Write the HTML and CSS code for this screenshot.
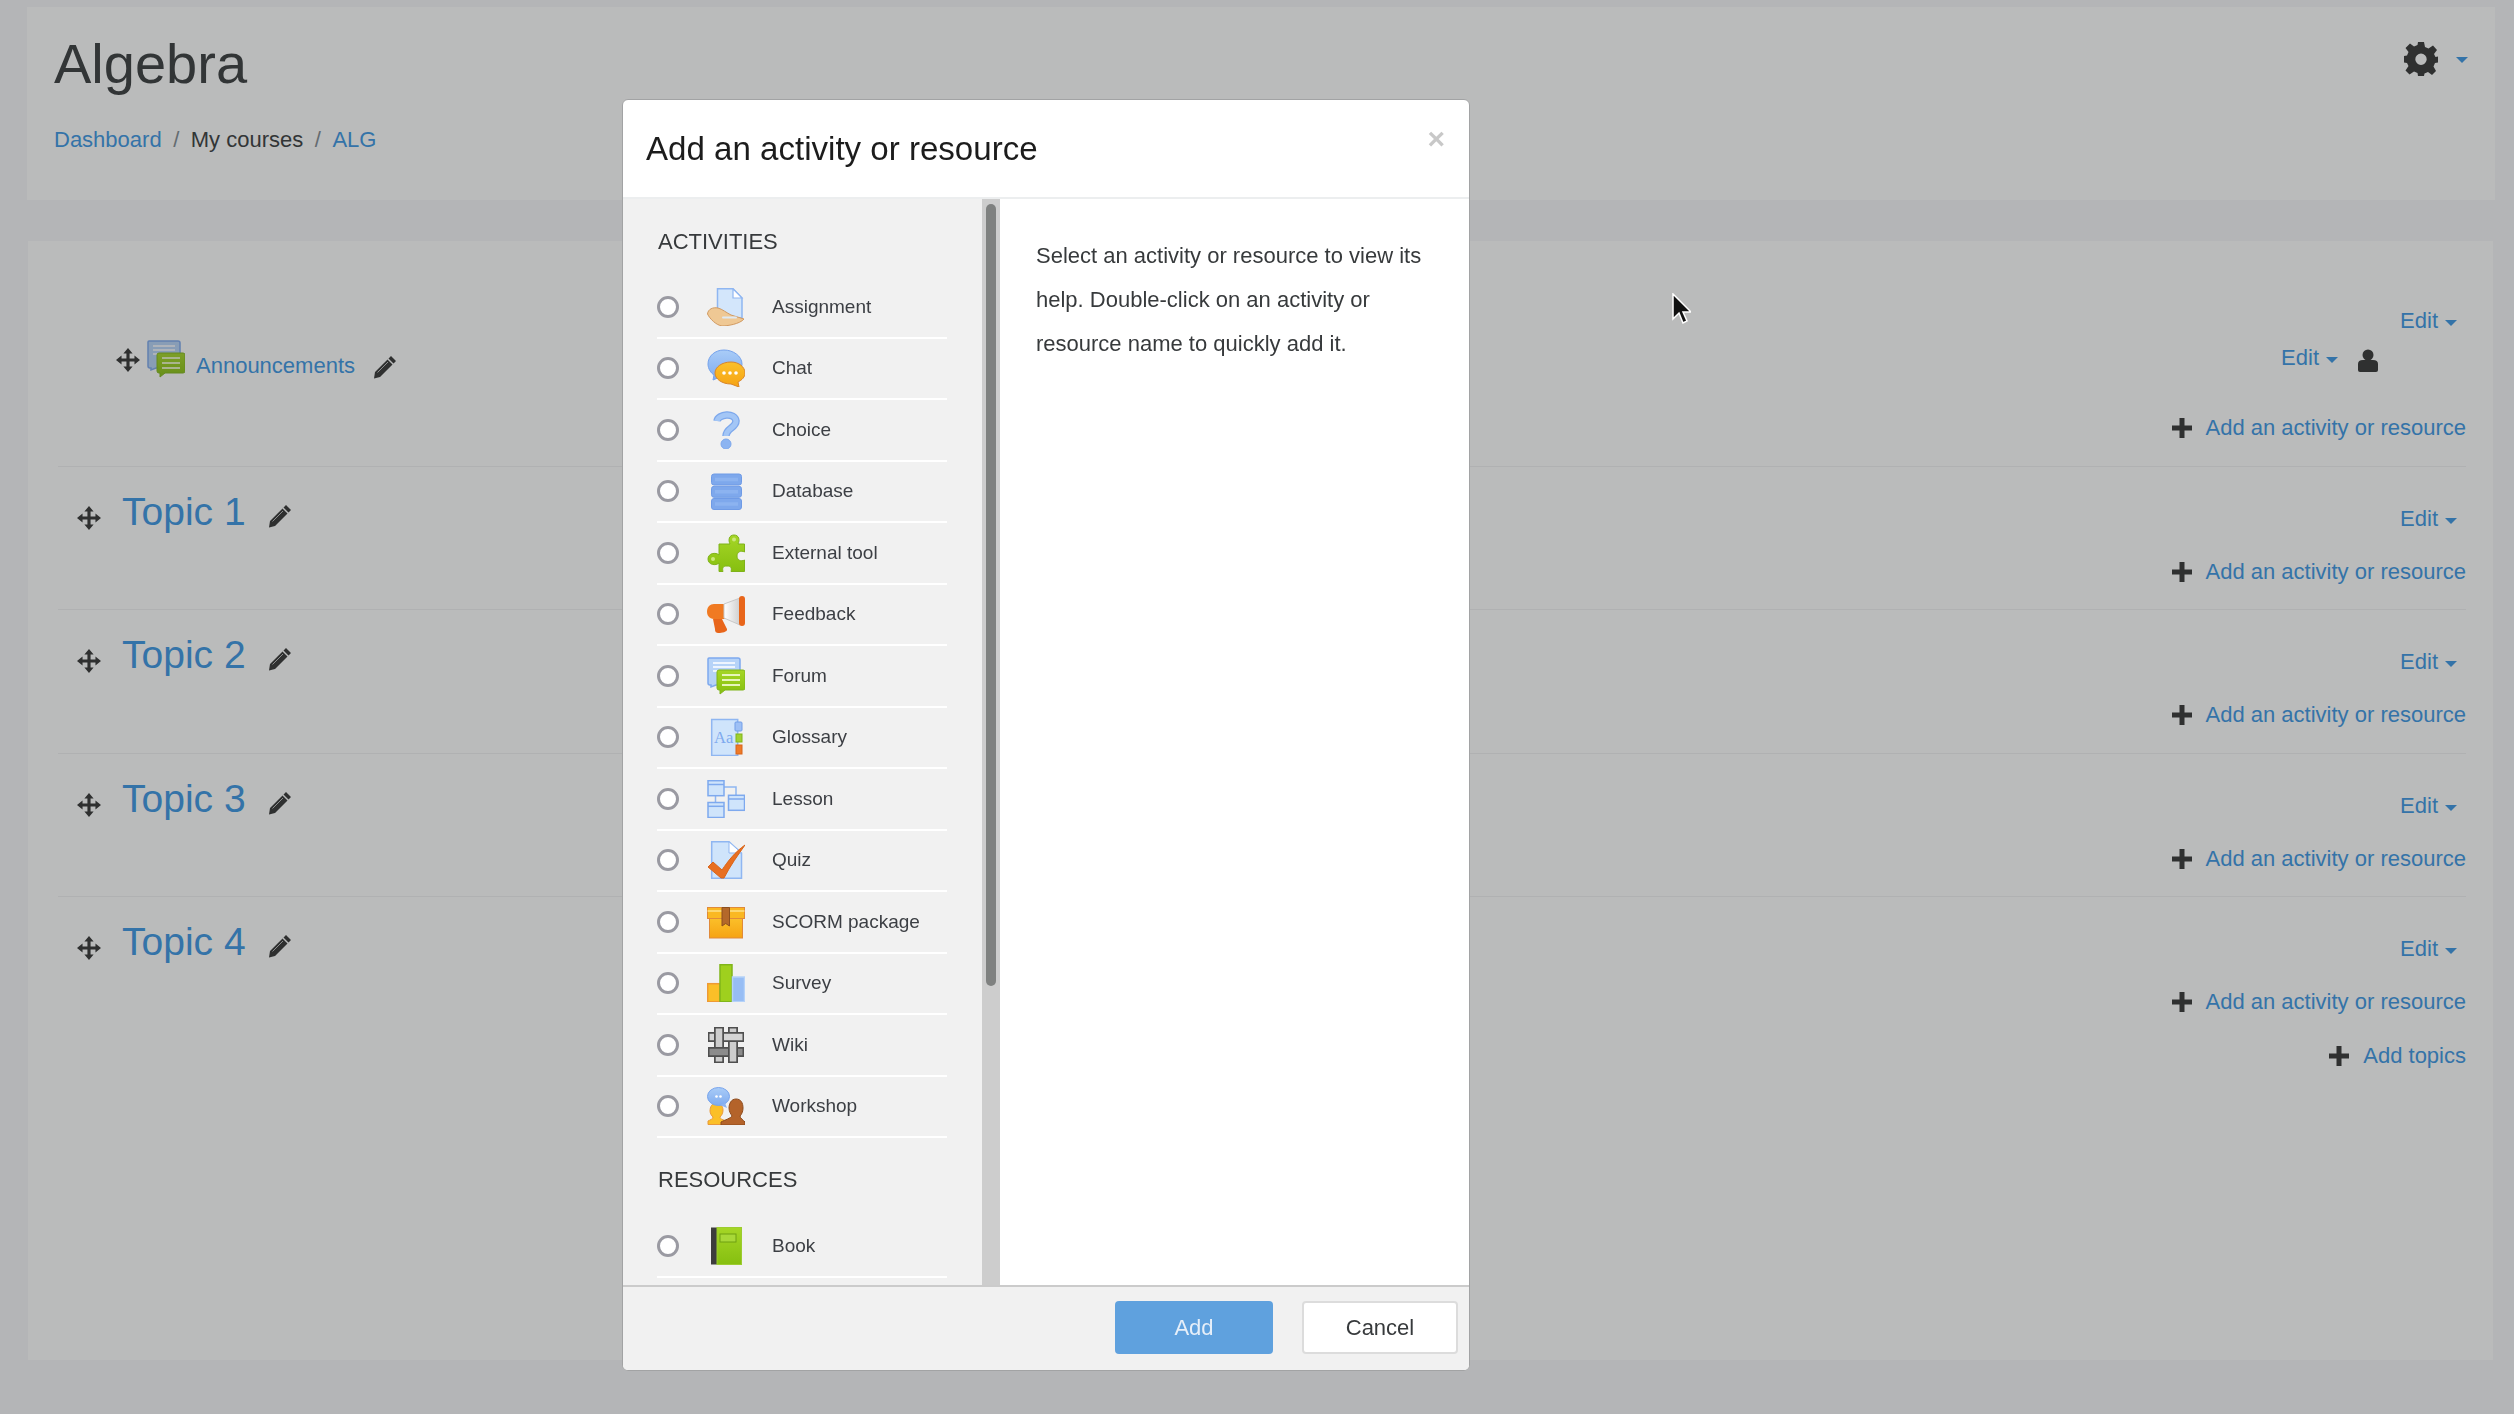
FILE: index.html
```html
<!DOCTYPE html>
<html lang="en">
<head>
<meta charset="utf-8">
<title>Algebra</title>
<link rel="stylesheet" href="styles.css">
</head>
<body>
<svg class="sprite" aria-hidden="true">
  <defs>
    <linearGradient id="gb" x1="0" y1="0" x2="0" y2="1"><stop offset="0" stop-color="#a9ccf7"/><stop offset="1" stop-color="#7fabef"/></linearGradient>
    <linearGradient id="go" x1="0" y1="0" x2="0" y2="1"><stop offset="0" stop-color="#fbc02a"/><stop offset="1" stop-color="#f6a313"/></linearGradient>
    <linearGradient id="gg" x1="0" y1="0" x2="0" y2="1"><stop offset="0" stop-color="#a5d626"/><stop offset="1" stop-color="#86bf10"/></linearGradient>
    <linearGradient id="gw" x1="0" y1="0" x2="1" y2="0"><stop offset="0" stop-color="#ffffff"/><stop offset="1" stop-color="#cfcfcf"/></linearGradient>
    <symbol id="i-assign" viewBox="0 0 38 38">
      <path d="M10.500 .8H26L35 10V30H10.500Z" fill="#d3e6fb" stroke="#8fb6f1" stroke-width="1.500"/>
      <path d="M26 .8V10H35Z" fill="#fff" stroke="#8fb6f1" stroke-width="1.200"/>
      <path d="M.5 26C1 21 6 19 11 20C15 21 20 25 24 27L37 31C33 36 20 38 15 38C9 37 3 31 .5 26Z" fill="#efc894" stroke="#d19a62"/>
      <path d="M16 29.500H29" stroke="#dfe9f2" stroke-width="2" stroke-linecap="round"/>
    </symbol>
    <symbol id="i-chat" viewBox="0 0 38 38">
      <path d="M17 1C8 1 1 7 1 15C1 20 4 24 7 26L6 31L13 28C15 29 18 29 20 29C28 29 35 23 35 15C35 7 26 1 17 1Z" fill="url(#gb)" stroke="#76a3ec"/>
      <path d="M24 13C15 13 8 18 8 24C8 30 15 35 24 35L32 38L31 33C35 31 38 28 38 24C38 18 32 13 24 13Z" fill="url(#go)" stroke="#d8852a"/>
      <circle cx="17" cy="24" r="1.800" fill="#fff"/><circle cx="23" cy="24" r="1.800" fill="#fff"/><circle cx="29" cy="24" r="1.800" fill="#fff"/>
    </symbol>
    <symbol id="i-choice" viewBox="0 0 38 38">
      <path d="M10 10C11 3 28 1 29 10C29 17 19 17 19 25" fill="none" stroke="#7da8ec" stroke-width="7.500"/>
      <path d="M10 10C11 3 28 1 29 10C29 17 19 17 19 25" fill="none" stroke="#a3c6f6" stroke-width="5"/>
      <circle cx="19" cy="33" r="5" fill="#8cb4f1" stroke="#7da8ec"/>
    </symbol>
    <symbol id="i-db" viewBox="0 0 38 38">
      <rect x="4.500" y="2" width="30" height="11" rx="2.500" fill="#7ea8ec" stroke="#6f9be6"/>
      <rect x="4.500" y="14.300" width="30" height="11" rx="2.500" fill="#7ea8ec" stroke="#6f9be6"/>
      <rect x="4.500" y="26.500" width="30" height="11" rx="2.500" fill="#7ea8ec" stroke="#6f9be6"/>
      <path d="M8 7.500H31M8 19.800H31M8 32H31" stroke="#8cb3f0" stroke-width="3.500"/>
    </symbol>
    <symbol id="i-ext" viewBox="0 0 38 38">
      <path d="M12 10H23C21 6 22 1 27 1C32 1 33 6 31 10H37.500V18C34 16 30 18 30 22C30 26 34 28 37.500 26V37.500H24C25 34 24 32 20 32C16 32 15 34 16 37.500H12V29C9 32 1 31 1 25C1 19 9 18 12 21Z" fill="url(#gg)" stroke="#7fb21a"/>
      <circle cx="27" cy="5.500" r="2" fill="#cbe77c"/><circle cx="6" cy="25" r="2" fill="#cbe77c"/>
    </symbol>
    <symbol id="i-feed" viewBox="0 0 38 38">
      <path d="M7 9H18V24H7C2 24 0 20 0 16.500C0 12 3 9 7 9Z" fill="#f07a22"/>
      <path d="M6 24H15L20 34C21 37 14 38 12 38C9 38 8 37 8 34Z" fill="#e8651a"/>
      <path d="M17 9L33 3V30L17 23Z" fill="url(#gw)" stroke="#c8c8c8"/>
      <rect x="32" y="1" width="6" height="30" rx="3" fill="#e8651a"/>
    </symbol>
    <symbol id="i-forum" viewBox="0 0 38 38">
      <path d="M2 1H31Q33 1 33 3V26Q33 28 31 28H9L4 30V28H3Q1 28 1 26V2Q1 1 2 1Z" fill="#b6d3f8" stroke="#7ea9ee" stroke-width="1.500"/>
      <path d="M6 6H28M6 10H28M6 14H28" stroke="#fff" stroke-width="1.500"/>
      <path d="M12 13H36Q38 13 38 15V31Q38 33 36 33H18L13 37V33H12Q10 33 10 31V15Q10 13 12 13Z" fill="url(#gg)" stroke="#80b51a"/>
      <path d="M15 18H33M15 23H33M15 28H33" stroke="#e6f5bb" stroke-width="2"/>
    </symbol>
    <symbol id="i-gloss" viewBox="0 0 38 38">
      <rect x="4.700" y="1.500" width="26" height="36" fill="#cfe4fb" stroke="#8fb6f1" stroke-width="1.500"/>
      <text x="7" y="25" class="aa">Aa</text>
      <rect x="28" y="4" width="7" height="9" rx="1" fill="#9ec0f5" stroke="#739fe8"/>
      <rect x="29" y="16" width="6" height="8" fill="#a0d030" stroke="#80b51a"/>
      <rect x="29" y="27" width="6" height="9" fill="#ee7a28" stroke="#d8651a"/>
    </symbol>
    <symbol id="i-lesson" viewBox="0 0 38 38">
      <path d="M17 7H29V15M8.500 16V22" fill="none" stroke="#8fb6f1" stroke-width="1.500"/>
      <rect x="1" y=".7" width="16" height="15" fill="#cfe4fb" stroke="#7ea9ee" stroke-width="1.500"/>
      <path d="M1 4.500H17" stroke="#7ea9ee" stroke-width="1.500"/>
      <rect x="21.500" y="15.300" width="16" height="15" fill="#cfe4fb" stroke="#7ea9ee" stroke-width="1.500"/>
      <path d="M21.500 19H37.500" stroke="#7ea9ee" stroke-width="1.500"/>
      <rect x="1" y="22.500" width="16" height="15" fill="#cfe4fb" stroke="#7ea9ee" stroke-width="1.500"/>
      <path d="M1 26.300H17" stroke="#7ea9ee" stroke-width="1.500"/>
    </symbol>
    <symbol id="i-quiz" viewBox="0 0 38 38">
      <path d="M4.700 .8H22L34.500 12V37.200H4.700Z" fill="#cfe4fb" stroke="#8fb6f1" stroke-width="1.500"/>
      <path d="M22 .8V12H34.500Z" fill="#fff" stroke="#8fb6f1"/>
      <path d="M1 26L6 21L15 29C21 20 28 11 38 4C31 14 23 25 17 37H14Z" fill="#e86f22" stroke="#d8651a" stroke-linejoin="round"/>
    </symbol>
    <symbol id="i-scorm" viewBox="0 0 38 38">
      <rect x="2.500" y="15" width="33" height="20" fill="url(#go)" stroke="#e08a3a"/>
      <rect x=".5" y="4.500" width="37" height="11" fill="#fab822" stroke="#e08a3a"/>
      <path d="M.5 8H37.500" stroke="#fde28a" stroke-width="1.500"/>
      <path d="M15 4.500H22.500V23L18.700 20.500L15 23Z" fill="#b4682a" stroke="#8c4f1e"/>
    </symbol>
    <symbol id="i-survey" viewBox="0 0 38 38">
      <rect x=".7" y="19.700" width="12" height="18" fill="#fbbf28" stroke="#ee9a34" stroke-width="1.500"/>
      <rect x="13" y=".7" width="12" height="37" fill="#9fd01e" stroke="#80b51a" stroke-width="1.500"/>
      <rect x="25.500" y="13" width="12" height="24.700" fill="#97bdf4" stroke="#b5d2f8" stroke-width="1.500"/>
    </symbol>
    <symbol id="i-wiki" viewBox="0 0 38 38">
      <path d="M1 11H37M1 26H37" stroke="#4f4f4f" stroke-width="10" fill="none"/>
      <path d="M2.500 11H35.500" stroke="#d4d4d4" stroke-width="6.500" fill="none"/>
      <path d="M2.500 26H35.500" stroke="#8c8c8c" stroke-width="6.500" fill="none"/>
      <path d="M12 1V37M26 1V37" stroke="#4f4f4f" stroke-width="10" fill="none"/>
      <path d="M12 2.500V35.500M26 2.500V35.500" stroke="#cdcdcd" stroke-width="6.500" fill="none"/>
      <path d="M21 11H31" stroke="#4f4f4f" stroke-width="10"/>
      <path d="M21 11H31" stroke="#d4d4d4" stroke-width="6.500"/>
      <path d="M7 26H17" stroke="#4f4f4f" stroke-width="10"/>
      <path d="M7 26H17" stroke="#8c8c8c" stroke-width="6.500"/>
    </symbol>
    <symbol id="i-work" viewBox="0 0 38 38">
      <path d="M9 16C5 16 3 20 3 24C3 27 5 29 6 30C6 32 3 33 1 34V37.500H20V34C16 33 13 32 13 30C15 28 16 26 16 23C16 19 13 16 9 16Z" fill="#fbbf28" stroke="#e8983a"/>
      <path d="M29 12C24 12 22 17 22 21C22 25 24 27 25 29C24 31 18 33 14 35V38H38V35C36 33 33 31 33 29C35 27 36 24 36 21C36 16 34 12 29 12Z" fill="#b4632a" stroke="#8c4a1c"/>
      <ellipse cx="11.500" cy="9.500" rx="11" ry="9" fill="url(#gb)" stroke="#76a3ec"/>
      <path d="M18 16L20 21L13 18Z" fill="#8db3f0"/>
      <circle cx="9.500" cy="9.500" r="1.300" fill="#fff"/><circle cx="13.500" cy="9.500" r="1.300" fill="#fff"/>
    </symbol>
    <symbol id="i-book" viewBox="0 0 38 38">
      <rect x="4" y=".5" width="6" height="37" fill="#3d3d3d"/>
      <rect x="10" y=".5" width="24.500" height="37" fill="url(#gg)" stroke="#9ccc30"/>
      <rect x="13" y="7" width="16" height="8" fill="#a8d838" stroke="#6fa010"/>
    </symbol>
    <symbol id="i-move" viewBox="0 0 26 26">
      <path d="M13 0L18 6H14.700V11.300H20V8L26 13L20 18V14.700H14.700V20H18L13 26L8 20H11.300V14.700H6V18L0 13L6 8V11.300H11.300V6H8Z" fill="#333"/>
    </symbol>
    <symbol id="i-pencil" viewBox="0 0 24 24">
      <path d="M18 1L23 6L20.500 8.500L15.500 3.500ZM14.500 4.500L19.500 9.500L7 22L1 23.500L2 17Z" fill="#333"/>
      <path d="M4.500 17.500L15 7" stroke="#bbb" stroke-width="1"/>
    </symbol>
    <symbol id="i-plus" viewBox="0 0 20 20">
      <path d="M7.500 0H12.500V7.500H20V12.500H12.500V20H7.500V12.500H0V7.500H7.500Z" fill="#333"/>
    </symbol>
    <symbol id="i-user" viewBox="0 0 20 23">
      <circle cx="10" cy="6" r="5.500" fill="#333"/>
      <path d="M0 21V15Q0 11 5 11H15Q20 11 20 15V21Q20 23 18 23H2Q0 23 0 21Z" fill="#333"/>
    </symbol>
    <symbol id="i-gear" viewBox="0 0 34 34">
      <path fill="#333" fill-rule="evenodd" d="M14 0H20L21 5L24.500 6.500L29 3.500L33 8L30 12L31.500 15L34 14.500V20.500L31 21L29.500 24.500L32 29L28 33L24 30L20.500 31.500L20 34H14L13.500 31L10 29.500L5.500 32.500L1.500 28.500L4.500 24L3 21L0 20.500V14L3 13.500L4.500 10L1.500 6L6 1.500L10 4.500L13.500 3ZM17 11.500A5.700 5.700 0 1 0 17 22.900A5.700 5.700 0 1 0 17 11.500Z"/>
    </symbol>
  </defs>
</svg>

<div class="page">
  <header class="head card">
    <div class="head-text">
      <h1 class="course">Algebra</h1>
      <nav class="crumbs">
        <a class="link" href="#">Dashboard</a><span class="sep">/</span><span>My courses</span><span class="sep">/</span><a class="link" href="#">ALG</a>
      </nav>
    </div>
    <div class="head-menu">
      <svg class="gear"><use href="#i-gear"/></svg><span class="caret caret-gear"></span>
    </div>
  </header>

  <main class="course-body card">
    <section class="sect sect-zero">
      <div class="edit-row"><a class="link edit" href="#">Edit<span class="caret"></span></a></div>
      <div class="activity">
        <div class="activity-main">
          <svg class="mv mv-small"><use href="#i-move"/></svg>
          <svg class="act-icon"><use href="#i-forum"/></svg>
          <a class="link act-name" href="#">Announcements</a>
          <svg class="pen pen-act"><use href="#i-pencil"/></svg>
        </div>
        <div class="activity-side">
          <a class="link edit" href="#">Edit<span class="caret"></span></a>
          <svg class="usr"><use href="#i-user"/></svg>
        </div>
      </div>
      <div class="add-row"><svg class="plus"><use href="#i-plus"/></svg><a class="link" href="#">Add an activity or resource</a></div>
    </section>

    <section class="sect">
      <div class="sect-top">
        <div class="sect-title"><svg class="mv"><use href="#i-move"/></svg><a class="link topic" href="#">Topic 1</a><svg class="pen"><use href="#i-pencil"/></svg></div>
        <a class="link edit edit-top" href="#">Edit<span class="caret"></span></a>
      </div>
      <div class="add-row"><svg class="plus"><use href="#i-plus"/></svg><a class="link" href="#">Add an activity or resource</a></div>
    </section>
    <section class="sect">
      <div class="sect-top">
        <div class="sect-title"><svg class="mv"><use href="#i-move"/></svg><a class="link topic" href="#">Topic 2</a><svg class="pen"><use href="#i-pencil"/></svg></div>
        <a class="link edit edit-top" href="#">Edit<span class="caret"></span></a>
      </div>
      <div class="add-row"><svg class="plus"><use href="#i-plus"/></svg><a class="link" href="#">Add an activity or resource</a></div>
    </section>
    <section class="sect">
      <div class="sect-top">
        <div class="sect-title"><svg class="mv"><use href="#i-move"/></svg><a class="link topic" href="#">Topic 3</a><svg class="pen"><use href="#i-pencil"/></svg></div>
        <a class="link edit edit-top" href="#">Edit<span class="caret"></span></a>
      </div>
      <div class="add-row"><svg class="plus"><use href="#i-plus"/></svg><a class="link" href="#">Add an activity or resource</a></div>
    </section>
    <section class="sect sect-last">
      <div class="sect-top">
        <div class="sect-title"><svg class="mv"><use href="#i-move"/></svg><a class="link topic" href="#">Topic 4</a><svg class="pen"><use href="#i-pencil"/></svg></div>
        <a class="link edit edit-top" href="#">Edit<span class="caret"></span></a>
      </div>
      <div class="add-row"><svg class="plus"><use href="#i-plus"/></svg><a class="link" href="#">Add an activity or resource</a></div>
    </section>
    <div class="add-row add-topics"><svg class="plus"><use href="#i-plus"/></svg><a class="link" href="#">Add topics</a></div>
  </main>
</div>

<div class="backdrop"></div>

<div class="modal" role="dialog">
  <div class="modal-head">
    <h2 class="modal-title">Add an activity or resource</h2>
    <span class="close">×</span>
  </div>
  <div class="modal-body">
    <div class="chooser">
      <h3 class="group">ACTIVITIES</h3>
      <div class="opt"><span class="radio"></span><svg class="opt-icon"><use href="#i-assign"/></svg><span class="opt-name">Assignment</span></div>
      <div class="opt"><span class="radio"></span><svg class="opt-icon"><use href="#i-chat"/></svg><span class="opt-name">Chat</span></div>
      <div class="opt"><span class="radio"></span><svg class="opt-icon"><use href="#i-choice"/></svg><span class="opt-name">Choice</span></div>
      <div class="opt"><span class="radio"></span><svg class="opt-icon"><use href="#i-db"/></svg><span class="opt-name">Database</span></div>
      <div class="opt"><span class="radio"></span><svg class="opt-icon"><use href="#i-ext"/></svg><span class="opt-name">External tool</span></div>
      <div class="opt"><span class="radio"></span><svg class="opt-icon"><use href="#i-feed"/></svg><span class="opt-name">Feedback</span></div>
      <div class="opt"><span class="radio"></span><svg class="opt-icon"><use href="#i-forum"/></svg><span class="opt-name">Forum</span></div>
      <div class="opt"><span class="radio"></span><svg class="opt-icon"><use href="#i-gloss"/></svg><span class="opt-name">Glossary</span></div>
      <div class="opt"><span class="radio"></span><svg class="opt-icon"><use href="#i-lesson"/></svg><span class="opt-name">Lesson</span></div>
      <div class="opt"><span class="radio"></span><svg class="opt-icon"><use href="#i-quiz"/></svg><span class="opt-name">Quiz</span></div>
      <div class="opt"><span class="radio"></span><svg class="opt-icon"><use href="#i-scorm"/></svg><span class="opt-name">SCORM package</span></div>
      <div class="opt"><span class="radio"></span><svg class="opt-icon"><use href="#i-survey"/></svg><span class="opt-name">Survey</span></div>
      <div class="opt"><span class="radio"></span><svg class="opt-icon"><use href="#i-wiki"/></svg><span class="opt-name">Wiki</span></div>
      <div class="opt"><span class="radio"></span><svg class="opt-icon"><use href="#i-work"/></svg><span class="opt-name">Workshop</span></div>
      <h3 class="group group-res">RESOURCES</h3>
      <div class="opt"><span class="radio"></span><svg class="opt-icon"><use href="#i-book"/></svg><span class="opt-name">Book</span></div>
    </div>
    <div class="scroll"><div class="thumb"></div></div>
    <div class="help">Select an activity or resource to view its help. Double-click on an activity or resource name to quickly add it.</div>
  </div>
  <div class="modal-foot">
    <button class="btn btn-add" type="button">Add</button>
    <button class="btn btn-cancel" type="button">Cancel</button>
  </div>
</div>

<svg class="cursor" viewBox="0 0 20 32"><path d="M2 1V26L8 20L12 30L16 28L12 19H20Z" fill="#111" stroke="#fff" stroke-width="1.500"/></svg>
</body>
</html>
```
FILE: styles.css
```css
* { box-sizing: border-box; }
html, body { margin: 0; height: 100%; }
body {
  background: #f7f7f9;
  color: #373a3c;
  font-family: "Liberation Sans", Arial, sans-serif;
  font-size: 22px;
  overflow: hidden;
}
.sprite { position: absolute; width: 0; height: 0; }
.page { padding: 7px 19px 0 27px; }
.card { background: #fff; }
.link { color: #3a96e4; text-decoration: none; }

.head {
  height: 193px;
  display: flex;
  justify-content: space-between;
  padding: 0 27px;
}
.course {
  margin: 0;
  padding-top: 26px;
  font-size: 56px;
  font-weight: 400;
  line-height: 62px;
}
.crumbs {
  margin-top: 29px;
  display: flex;
  line-height: 32px;
}
.sep { padding: 0 11.5px; color: #818a91; }
.head-menu { display: flex; align-items: flex-start; padding-top: 35px; }
.gear { width: 34px; height: 34px; }
.caret {
  display: inline-block;
  width: 0;
  height: 0;
  margin-left: 7px;
  vertical-align: 2px;
  border-top: 6px solid #3a96e4;
  border-left: 6px solid transparent;
  border-right: 6px solid transparent;
}
.caret-gear { margin: 15px 0 0 18px; }

.course-body {
  margin: 41px 2px 0 1px;
  height: 1119px;
  padding: 0 27px 0 30px;
}
.sect { height: 143.33px; padding-top: 22px; border-bottom: 1px solid #f0f1f2; }
.sect-zero { height: 226px; padding-top: 63px; }
.sect-last { border-bottom: 0; height: 122px; }
.edit-row { display: flex; justify-content: flex-end; padding-right: 9px; line-height: 33px; height: 32px; }
.activity { display: flex; justify-content: space-between; height: 44px; margin-bottom: 32px; }
.activity-main { display: flex; align-items: flex-start; padding: 4px 0 0 58px; }
.mv { width: 24px; height: 26px; margin: 16px 0 0 19px; flex: none; }
.mv-small { margin: 7px 7px 0 0; }
.act-icon { width: 38px; height: 38px; flex: none; }
.act-name { margin: 8px 0 0 11px; line-height: 36px; }
.pen { width: 24px; height: 24px; margin: 15px 0 0 22px; flex: none; }
.pen-act { margin: 15px 0 0 18px; }
.activity-side { display: flex; align-items: flex-start; padding-right: 88px; padding-top: 6px; line-height: 32px; }
.usr { width: 20px; height: 23px; margin: 7px 0 0 20px; flex: none; }
.sect-top { display: flex; justify-content: space-between; align-items: flex-start; height: 45px; }
.sect-title { display: flex; align-items: flex-start; }
.topic { font-size: 39px; line-height: 45px; margin-left: 21px; }
.edit-top { line-height: 32px; margin-top: 14px; margin-right: 9px; }
.add-row { display: flex; justify-content: flex-end; align-items: center; height: 32px; margin-top: 22px; }
.sect-zero .add-row { margin-top: 0; }
.add-topics { margin-top: 21px; }
.plus { width: 20px; height: 20px; margin-right: 14px; flex: none; }

.backdrop {
  position: fixed;
  inset: 0;
  background: rgba(41, 43, 44, .32);
}

.modal {
  position: fixed;
  left: 622px;
  top: 99px;
  width: 848px;
  height: 1272px;
  background: #fff;
  border: 1px solid #a2a3a4;
  border-radius: 6px;
  display: flex;
  flex-direction: column;
  overflow: hidden;
}
.modal-head {
  height: 99px;
  flex: none;
  display: flex;
  justify-content: space-between;
  border-bottom: 2px solid #eceeef;
  padding: 0 24px 0 23px;
}
.modal-title { margin: 0; font-size: 33.1px; font-weight: 400; line-height: 97px; color: #1c1c1c; }
.close { font-size: 30px; font-weight: 700; color: #c8c8c8; line-height: 78px; }
.modal-body { flex: 1; min-height: 0; display: flex; }
.chooser {
  width: 359px;
  flex: none;
  background: #f1f1f1;
  padding: 0 34px;
  overflow: hidden;
}
.group { margin: 0; padding: 27px 0 0 1px; font-size: 22px; font-weight: 400; line-height: 32px; height: 78px; color: #373a3c; }
.group-res { padding-top: 26px; height: 78.5px; }
.opt {
  display: flex;
  align-items: center;
  height: 61.5px;
  border-bottom: 2px solid #fff;
  width: 290px;
}
.radio {
  width: 22px;
  height: 22px;
  border: 3px solid #9a9aa2;
  border-radius: 50%;
  background: #fff;
  flex: none;
}
.opt-icon { width: 38px; height: 38px; margin-left: 28px; flex: none; }
.opt-name { margin-left: 27px; font-size: 19px; color: #3c3f44; }
.aa { font-family: "Liberation Serif", serif; font-size: 16.5px; fill: #7ea9ee; }
.scroll { width: 18px; flex: none; background: #cdcdcd; padding: 5px 4px 0; }
.thumb { height: 782px; background: #7f8180; border-radius: 5px; }
.help { flex: 1; padding: 35px 30px 0 36px; font-size: 22px; line-height: 44px; color: #373a3c; }
.modal-foot {
  height: 85px;
  flex: none;
  background: #f1f1f1;
  border-top: 2px solid #cbcbcb;
  display: flex;
  justify-content: flex-end;
  align-items: flex-start;
  padding: 14px 11px 0 0;
  gap: 29px;
}
.btn { height: 53px; border-radius: 4px; font: 400 22px "Liberation Sans", Arial, sans-serif; }
.btn-add { width: 158px; background: #5fa1de; border: 0; color: #e6eff9; }
.btn-cancel { width: 156px; background: #fff; border: 2px solid #dcdcdc; color: #373a3c; }

.cursor { position: fixed; left: 1671px; top: 293px; width: 20px; height: 32px; }
```
